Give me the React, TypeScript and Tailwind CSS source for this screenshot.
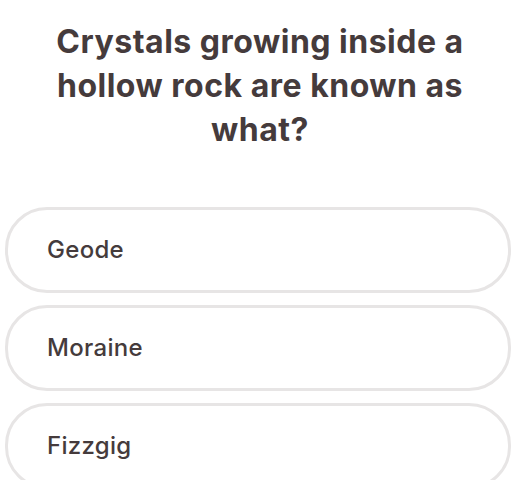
const answers = ["Geode", "Moraine", "Fizzgig"];

export default function App() {
  return (
    <div
      className="w-[520px] h-[480px] overflow-hidden bg-white text-[#453b3c]"
      style={{ fontFamily: "Inter, 'Noto Sans', sans-serif" }}
    >
      <h1 className="mx-auto w-[440px] pt-[20px] text-center text-[32px] font-bold leading-[44px] tracking-[0.5px]">
        Crystals growing inside a hollow rock are known as what?
      </h1>

      <div className="mt-[55px] ml-[5px] mr-[9px] flex flex-col gap-[12px]">
        {answers.map((a) => (
          <button
            key={a}
            className="flex h-[86px] items-center rounded-[42px] border-[3px] border-[#e7e5e5] pl-[39px] text-left text-[24px] font-medium tracking-[0.3px]"
          >
            {a}
          </button>
        ))}
      </div>
    </div>
  );
}
